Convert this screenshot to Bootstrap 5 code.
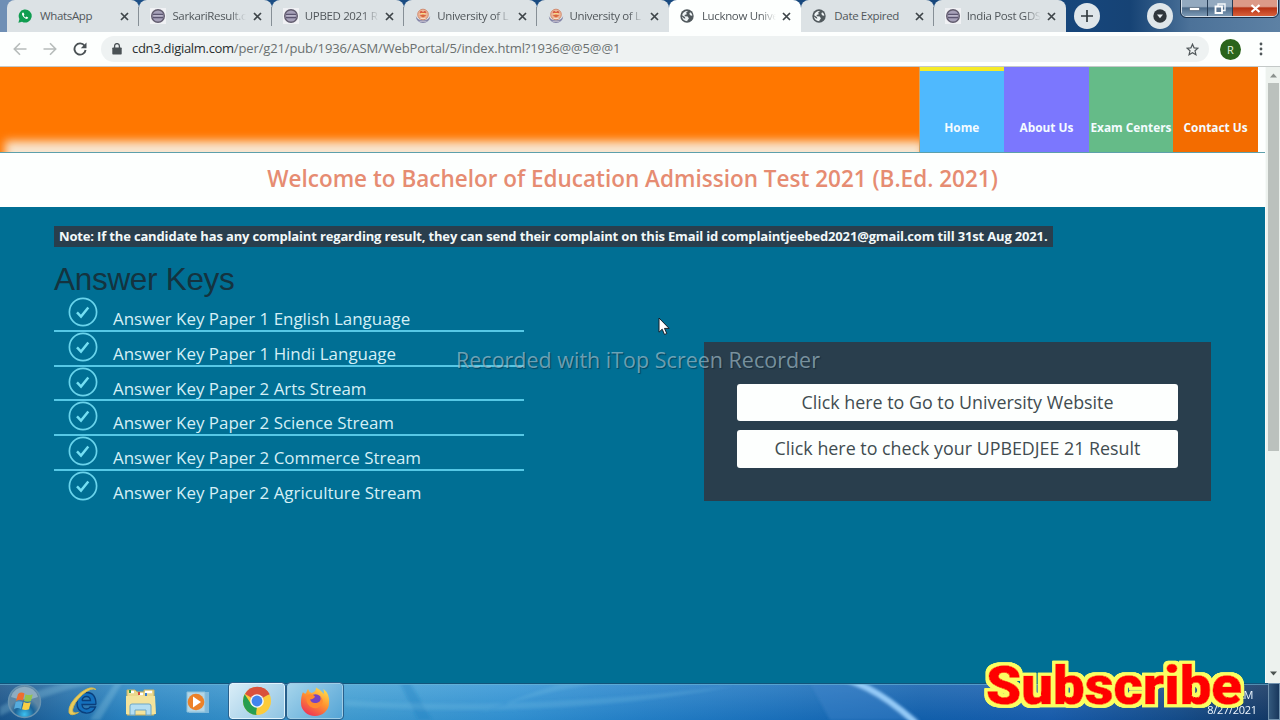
<!DOCTYPE html>
<html lang="en">
<head>
    <meta charset="UTF-8">
    <meta name="viewport" content="width=device-width, initial-scale=1.0">
    <title>Lucknow University</title>
    <!-- Bootstrap CSS -->
    <link href="https://cdn.jsdelivr.net/npm/bootstrap@5.3.0/dist/css/bootstrap.min.css" rel="stylesheet">
    <style>
        body {
            font-family: "Open Sans", "Noto Sans", sans-serif;
            width: 1280px;
            height: 720px;
            background: #006f94;
        }
        svg { display: block; flex: none; }

        /* browser tabs */
        .tab-strip {
            height: 32px;
            padding-left: 7px;
            background: linear-gradient(90deg, #6f8fb5 0, #6f8fb5 8px, #1c4f86 140px, #16457a 1090px, #164375 1130px, #4c7299 1190px, #5d81a4 1280px);
        }
        .browser-tab {
            width: 132.4px;
            height: 32px;
            padding: 0 10px 0 11px;
            background: #dce2e5;
            border-radius: 8px 8px 0 0;
            font-size: 11.5px;
            color: #51575b;
        }
        .browser-tab + .browser-tab::before {
            content: "";
            width: 1px;
            height: 19px;
            margin-left: -12px;
            margin-right: 11px;
            background: #868f96;
        }
        .browser-tab.current { background: #fdfffe; }
        .browser-tab.current::before, .browser-tab.current + .browser-tab::before { visibility: hidden; }
        .tab-label {
            width: 74px;
            margin-left: 6px;
            letter-spacing: -.35px;
            -webkit-mask-image: linear-gradient(90deg, #000 78%, transparent 100%);
        }
        .tab-label.whole { -webkit-mask-image: none; }
        .round-btn {
            width: 26px;
            height: 26px;
            margin-top: 3px;
            background: #dfe6ea;
        }
        .window-btns {
            width: 97px;
            height: 17px;
            margin-right: 2px;
            border: 1px solid #d5dee8;
            border-top: 0;
            border-radius: 0 0 5px 5px;
            outline: 1px solid #1c3149;
        }
        .win-btn { width: 27%; background: linear-gradient(#93a9bf 0 40%, #4b6988 50%, #7d9ab5); border-right: 1px solid #263c55; }
        .win-close { background: linear-gradient(#dc9a88 0 40%, #b63214 50%, #d9603a); }

        /* address row */
        .address-row { height: 35px; padding-left: 13px; background: #fdfffe; border-bottom: 1px solid #c4c9c8; }
        .address-pill {
            width: 1108px;
            height: 26px;
            margin-left: 14px;
            padding: 0 10px 0 11px;
            background: #eef2f2;
            font-size: 13px;
            letter-spacing: -.13px;
            color: #6a706f;
        }
        .address-pill b { font-weight: 400; letter-spacing: -.3px; color: #2a2f30; }
        .url-text { margin-left: 10px; }
        .avatar-dot { width: 21px; height: 21px; margin-right: 18px; background: #2b641b; color: #e4f2df; font: 11px "Open Sans", sans-serif; }
        .menu-dots { margin-right: 17px; }

        /* page */
        .page-view { height: 616px; }
        .page-body { width: 1265px; }
        .banner { height: 86px; background: #fdfffe; border-bottom: 1px solid #5da0ab; }
        .banner-art {
            width: 919.5px;
            background: #ff7700;
            overflow: hidden;
            border-right: 1px solid #c9a36c;
        }
        .banner-art::after {
            content: "";
            width: 100%;
            height: 40px;
            margin: 0 -30px -29px 5px;
            background: #f8e6d0;
            filter: blur(5px);
        }
        .nav-tile {
            width: 84.6px;
            padding-top: 51px;
            font-size: 11.85px;
            font-weight: 700;
            line-height: 18px;
            white-space: nowrap;
            color: #f4fbff;
        }
        .tile-home { background: #4fb9fe; border-top: 4px solid #f5ea27; padding-top: 47px; }
        .tile-about { background: #7b77fe; }
        .tile-exam { background: #65bb88; }
        .tile-contact { background: #f36c00; }
        .welcome {
            height: 54px;
            padding-bottom: 3px;
            background: #fdfffe;
            font-size: 22.5px;
            font-weight: 600;
            color: #e68c72;
        }
        .content-area { padding: 19px 54px 0; height: 476px; }
        .note-bar {
            width: 999px;
            height: 21px;
            padding-left: 5px;
            background: #293e4d;
            font-size: 13px;
            font-weight: 700;
            letter-spacing: -.16px;
            line-height: 20px;
            color: #f2f8f9;
            white-space: nowrap;
        }
        .keys-title {
            font: 31.5px/38px "Liberation Sans", Arial, sans-serif;
            letter-spacing: -.3px;
            color: #14333f;
            margin: 13px 0 -.6px;
        }
        .keys-list { width: 470px; }
        .key-row { height: 34.65px; border-bottom: 2px solid #56c8e6; padding-left: 14px; }
        .key-row:last-child { border: 0; }
        .key-row a { margin: 10px 0 0 15px; font-size: 16.93px; line-height: 24px; color: #d5eff6; }
        .link-panel {
            width: 507px;
            height: 159px;
            margin-top: 94.6px;
            padding: 42px 33px 0;
            background: #293e4d;
        }
        .panel-btn {
            height: 37.5px;
            background: #fdfffe;
            border-radius: 3px;
            font-size: 17.85px;
            line-height: 37px;
            color: #414c50;
        }
        .panel-btn + .panel-btn { margin-top: 9.3px; }

        /* scrollbar */
        .scroll-track { width: 15px; background: #edf2ee; border-left: 1px solid #f6faf8; padding: 16px 1px 0 2px; }
        .scroll-thumb { height: 368px; background: #bbc1bd; }
        .scroll-up, .scroll-down { left: 4px; }
        .scroll-up { top: 6px; }
        .scroll-down { bottom: 7px; }

        /* taskbar */
        .taskbar { height: 37px; background: #1668b4; }
        .task-slot { width: 57px; height: 37px; }
        .task-slot.start-slot { padding-left: 7px; }
        .task-slot.ie-slot { width: 51px; }
        .task-open {
            width: 56px;
            height: 36px;
            margin: 0 1px;
            border: 1px solid #e2f4fc;
            border-radius: 3px;
            outline: 1px solid #28608c;
            background: linear-gradient(135deg, #d9edf7, #8fc4e3);
        }
        .task-open.first { margin-left: 3px; }
        .task-open.dim { background: linear-gradient(135deg, #a5d4eb, #55a5d6); border-color: #a0cde5; }
        .clock { width: 64px; padding-top: 4px; font-size: 11px; line-height: 15px; color: #eef7ff; letter-spacing: -.3px; }
        .clock-time { padding-right: 11px; }
        .peek-btn { width: 12px; border: 1px solid #7192ae; background: linear-gradient(90deg, #34597d, #18375c); }

        /* things lying over the page */
        .watermark {
            left: 456px;
            top: 343px;
            font-size: 21.5px;
            line-height: 34px;
            color: rgba(180, 205, 215, .62);
            text-shadow: 1px 1px 1px rgba(0, 30, 45, .5);
            white-space: nowrap;
        }
        .pointer { left: 658px; top: 317px; }
        .subscribe { left: 970px; top: 645px; }
    </style>
</head>
<body class="position-relative overflow-hidden d-flex flex-column">

<!-- shared icons -->
<svg width="0" height="0" class="position-absolute">
    <symbol id="ico-x" viewBox="0 0 9 9"><path d="M1 1 8 8M8 1 1 8" stroke="#3e4549" stroke-width="1.7"/></symbol>
    <symbol id="ico-sarkari" viewBox="0 0 16 16">
        <path fill="#f0f1f4" d="M0 0h16v16H0z"/>
        <circle cx="8" cy="8" r="6.3" fill="#a6a0b8" stroke="#625c6e" stroke-width="1.4"/>
        <path d="M3 6.3h10M3 9.5h10" stroke="#5b5570" stroke-width="1.3"/><path d="M3.5 7.9h9" stroke="#c9c5d6"/>
    </symbol>
    <symbol id="ico-univ" viewBox="0 0 16 16">
        <path d="M.8 8a7.200 7 0 0 0 14.400 0q-1.500 4.200-7.200 4.200T.8 8" fill="#8384a6"/>
        <circle cx="8" cy="6.500" r="5.300" fill="#edb79a" stroke="#cf8468" stroke-width=".9"/>
        <path d="M4.500 4.500 6 2.800l2 1.200 2-1.200 1.500 1.700L8 6z" fill="#d6543c"/>
        <path d="M4.500 7.500 8 9.500l3.500-2L8 6.500z" fill="#d9683d"/>
        <path d="M6 5.500h4" stroke="#f8dc86" stroke-width="1.200"/><path d="M5.500 10.500h5" stroke="#f4dfc8"/><path d="M4.500 13.300h7" stroke="#d7cfdc" stroke-width=".8"/>
    </symbol>
    <symbol id="ico-globe" viewBox="0 0 14 14">
        <circle cx="7" cy="7" r="6.700" fill="#51595d"/>
        <path d="M8 2 6.200 3.600l.6 1.600-2.300.8.4 1.300 2.900.3 1.100 1.800-1.500 2-.2.900C4.200 12.100 2.200 10 1.900 7.600l2.300 1.900 1.200.1-.6-1.700-2.700-1.700C2.600 3.500 5 1.700 8 2M10 3.200 9.300 5l1.600 1.800 1.500-.2C12.200 5 11.200 3.800 10 3.200" fill="#eef3f5"/>
    </symbol>
    <symbol id="ico-check" viewBox="0 0 30 30">
        <circle cx="15" cy="15" r="13.600" fill="none" stroke="#69d4ec" stroke-width="1.700"/>
        <path d="m9 15.300 4 4.200 7.300-9" fill="none" stroke="#74dff3" stroke-width="2.500"/>
    </symbol>
</svg>

<!-- tabs -->
<div class="tab-strip d-flex flex-shrink-0">
    <div class="browser-tab d-flex align-items-center">
        <svg width="14" height="14" viewBox="0 0 14 14"><path d="M.4 13.700 1.400 10A6.500 6.500 0 1 1 4 12.700z" fill="#109d50"/><path d="M4.800 3.600c-1.400.8-1 2.500.7 4.400 2 2 3.700 2.500 4.700 1.100l-.1-.7-1.600-.8-.8.8C6.800 8 6.100 7.200 5.700 6.400l.7-.8-.8-1.900z" fill="#fff"/></svg>
        <div class="tab-label whole text-nowrap ms-2">WhatsApp</div>
        <svg width="9" height="9" class="ms-auto"><use href="#ico-x"/></svg>
    </div>
    <div class="browser-tab d-flex align-items-center">
        <svg width="16" height="16"><use href="#ico-sarkari"/></svg>
        <div class="tab-label text-nowrap">SarkariResult.c</div>
        <svg width="9" height="9" class="ms-auto"><use href="#ico-x"/></svg>
    </div>
    <div class="browser-tab d-flex align-items-center">
        <svg width="16" height="16"><use href="#ico-sarkari"/></svg>
        <div class="tab-label text-nowrap">UPBED 2021 R</div>
        <svg width="9" height="9" class="ms-auto"><use href="#ico-x"/></svg>
    </div>
    <div class="browser-tab d-flex align-items-center">
        <svg width="16" height="16"><use href="#ico-univ"/></svg>
        <div class="tab-label text-nowrap">University of L</div>
        <svg width="9" height="9" class="ms-auto"><use href="#ico-x"/></svg>
    </div>
    <div class="browser-tab d-flex align-items-center">
        <svg width="16" height="16"><use href="#ico-univ"/></svg>
        <div class="tab-label text-nowrap">University of L</div>
        <svg width="9" height="9" class="ms-auto"><use href="#ico-x"/></svg>
    </div>
    <div class="browser-tab current d-flex align-items-center">
        <svg width="14" height="14"><use href="#ico-globe"/></svg>
        <div class="tab-label text-nowrap ms-2">Lucknow Unive</div>
        <svg width="9" height="9" class="ms-auto"><use href="#ico-x"/></svg>
    </div>
    <div class="browser-tab d-flex align-items-center">
        <svg width="14" height="14"><use href="#ico-globe"/></svg>
        <div class="tab-label whole text-nowrap ms-2">Date Expired</div>
        <svg width="9" height="9" class="ms-auto"><use href="#ico-x"/></svg>
    </div>
    <div class="browser-tab d-flex align-items-center">
        <svg width="16" height="16"><use href="#ico-sarkari"/></svg>
        <div class="tab-label text-nowrap">India Post GDS</div>
        <svg width="9" height="9" class="ms-auto"><use href="#ico-x"/></svg>
    </div>
    <div class="round-btn rounded-circle d-flex align-items-center justify-content-center ms-2">
        <svg width="12" height="12" viewBox="0 0 12 12"><path d="M6 0v12M0 6h12" stroke="#333b40" stroke-width="1.700"/></svg>
    </div>
    <div class="round-btn rounded-circle d-flex align-items-center justify-content-center ms-auto me-2">
        <svg width="14" height="14" viewBox="0 0 14 14"><circle cx="7" cy="7" r="6.700" fill="#30373c"/><path d="M4 5.500h6L7 9.300z" fill="#e8eef1"/></svg>
    </div>
    <div class="window-btns d-flex overflow-hidden">
        <div class="win-btn d-flex align-items-center justify-content-center"><svg width="11" height="5"><path d="M.5 1.500h10v3H.5z" fill="#fff" stroke="#43566c" stroke-width=".6"/></svg></div>
        <div class="win-btn d-flex align-items-center justify-content-center"><svg width="12" height="11"><path d="M4 1h7v6.500H4z" fill="none" stroke="#f4f7fa" stroke-width="1.400"/><path d="M1.500 3.500H8V10H1.500z" fill="#5b7591" stroke="#fff" stroke-width="1.800"/></svg></div>
        <div class="win-close flex-fill d-flex align-items-center justify-content-center"><svg width="11" height="9"><path d="m1.500 1 8 7m0-7-8 7" stroke="#fff" stroke-width="2.200"/></svg></div>
    </div>
</div>

<!-- address row -->
<div class="address-row d-flex align-items-center flex-shrink-0">
    <svg width="14" height="14" viewBox="0 0 14 14" class="me-3"><path d="M13.500 7H1.500M7 1.300 1.300 7 7 12.700" fill="none" stroke="#b7bcbb" stroke-width="1.600"/></svg>
    <svg width="14" height="14" viewBox="0 0 14 14" class="me-3"><path d="M.5 7h12M7 1.300 12.700 7 7 12.700" fill="none" stroke="#b7bcbb" stroke-width="1.600"/></svg>
    <svg width="14" height="14" viewBox="0 0 14 14"><path d="M11.600 3.700A5.600 5.600 0 1 0 12.600 8" fill="none" stroke="#4a5154" stroke-width="1.900"/><path d="M13.500.5v5.700H7.800z" fill="#4a5154"/></svg>
    <div class="address-pill rounded-pill d-flex align-items-center">
        <svg width="10" height="12" viewBox="0 0 10 12"><path d="M1 4.500h8a.7.700 0 0 1 .7.700v5.600a.7.700 0 0 1-.7.700H1a.7.700 0 0 1-.7-.7V5.200A.7.700 0 0 1 1 4.500" fill="#4a5154"/><path d="M2.600 5V3a2.400 2.400 0 0 1 4.800 0v2" fill="none" stroke="#4a5154" stroke-width="1.300"/></svg>
        <div class="url-text text-nowrap"><b>cdn3.digialm.com</b>/per/g21/pub/1936/ASM/WebPortal/5/index.html?1936@@5@@1</div>
        <svg width="13" height="13" viewBox="0 0 14 14" class="ms-auto"><path d="m7 1.300 1.700 3.900 4.200.4-3.200 2.800 1 4.200L7 10.400l-3.700 2.200 1-4.200L1.100 5.600l4.200-.4z" fill="none" stroke="#50575a" stroke-width="1.300"/></svg>
    </div>
    <div class="avatar-dot rounded-circle d-flex align-items-center justify-content-center ms-auto">R</div>
    <svg width="4" height="14" viewBox="0 0 4 14" class="menu-dots"><g fill="#50575a"><circle cx="2" cy="2" r="1.400"/><circle cx="2" cy="7" r="1.400"/><circle cx="2" cy="12" r="1.400"/></g></svg>
</div>

<!-- page -->
<div class="page-view d-flex flex-shrink-0">
    <div class="page-body">
        <div class="banner d-flex">
            <div class="banner-art d-flex align-items-end"></div>
            <div class="nav-tile tile-home text-center">Home</div>
            <div class="nav-tile tile-about text-center">About Us</div>
            <div class="nav-tile tile-exam text-center">Exam Centers</div>
            <div class="nav-tile tile-contact text-center">Contact Us</div>
        </div>
        <div class="welcome d-flex align-items-center justify-content-center">Welcome to Bachelor of Education Admission Test 2021 (B.Ed. 2021)</div>
        <div class="content-area">
            <div class="note-bar">Note: If the candidate has any complaint regarding result, they can send their complaint on this Email id complaintjeebed2021@gmail.com till 31st Aug 2021.</div>
            <div class="d-flex justify-content-between">
                <div class="keys-list">
                    <h1 class="keys-title">Answer Keys</h1>
                    <div class="key-row d-flex"><svg width="30" height="30"><use href="#ico-check"/></svg><a class="text-decoration-none">Answer Key Paper 1 English Language</a></div>
                    <div class="key-row d-flex"><svg width="30" height="30"><use href="#ico-check"/></svg><a class="text-decoration-none">Answer Key Paper 1 Hindi Language</a></div>
                    <div class="key-row d-flex"><svg width="30" height="30"><use href="#ico-check"/></svg><a class="text-decoration-none">Answer Key Paper 2 Arts Stream</a></div>
                    <div class="key-row d-flex"><svg width="30" height="30"><use href="#ico-check"/></svg><a class="text-decoration-none">Answer Key Paper 2 Science Stream</a></div>
                    <div class="key-row d-flex"><svg width="30" height="30"><use href="#ico-check"/></svg><a class="text-decoration-none">Answer Key Paper 2 Commerce Stream</a></div>
                    <div class="key-row d-flex"><svg width="30" height="30"><use href="#ico-check"/></svg><a class="text-decoration-none">Answer Key Paper 2 Agriculture Stream</a></div>
                </div>
                <div class="link-panel">
                    <div class="panel-btn text-center">Click here to Go to University Website</div>
                    <div class="panel-btn text-center">Click here to check your UPBEDJEE 21 Result</div>
                </div>
            </div>
        </div>
    </div>
    <div class="scroll-track position-relative">
        <svg class="scroll-up position-absolute" width="8" height="5"><path d="M0 4.500h7L3.500.5z" fill="#8b918e"/></svg>
        <div class="scroll-thumb"></div>
        <svg class="scroll-down position-absolute" width="8" height="5"><path d="M0 .5h7L3.500 4.500z" fill="#4c5350"/></svg>
    </div>
</div>

<!-- taskbar -->
<div class="taskbar position-relative flex-shrink-0">
    <svg class="position-absolute top-0 start-0" width="1280" height="37" viewBox="0 0 1280 37">
        <defs>
            <linearGradient id="barFill">
                <stop offset="0" stop-color="#1b5488"/><stop offset=".05" stop-color="#256fa8"/><stop offset=".1" stop-color="#2b87c4"/>
                <stop offset=".27" stop-color="#45a2d5"/><stop offset=".4" stop-color="#3596d6"/><stop offset=".5" stop-color="#2784cb"/>
                <stop offset=".6" stop-color="#1d74bf"/><stop offset=".72" stop-color="#1361ae"/><stop offset=".82" stop-color="#1a5dad"/>
                <stop offset=".92" stop-color="#164b87"/><stop offset="1" stop-color="#14335c"/>
            </linearGradient>
            <linearGradient id="barShade" x2="0" y2="1"><stop offset="0" stop-color="#fff" stop-opacity=".12"/><stop offset="1" stop-color="#004a90" stop-opacity=".12"/></linearGradient>
            <filter id="soft"><feGaussianBlur stdDeviation="1.500"/></filter>
        </defs>
        <path fill="url(#barFill)" d="M0 0h1280v37H0z"/>
        <path fill="url(#barShade)" d="M0 0h1280v37H0z"/>
        <g filter="url(#soft)">
            <path d="M0 33Q40 12 95 0H65Q20 12 0 24zM100 37 122 0h-7L90 37z" fill="#9fd3ea" opacity=".28"/>
            <path d="m400 0 18 37h14L410 0z" fill="#1f7fc0" opacity=".35"/>
            <path d="M465 37Q520 12 600 0h-38Q510 17 465 37M345 17q160 12 390-14-180 34-390 20z" fill="#8fd0f0" opacity=".18"/>
            <path d="m810 0 20 37h90Q880 5 840 0z" fill="#4388cc" opacity=".4"/>
            <path d="M836-6Q878 2 924 48" fill="none" stroke="#94caf7" stroke-width="6"/>
        </g>
        <path d="M0 .5h1280" stroke="#12547b"/><path d="M0 1.500h1280" stroke="#6db8d7" opacity=".6"/>
    </svg>
    <div class="d-flex position-relative h-100">
        <div class="task-slot start-slot d-flex align-items-center">
            <svg width="35" height="35" viewBox="0 0 35 35">
                <defs><radialGradient id="orb" cy=".9"><stop offset="0" stop-color="#3cc0f0"/><stop offset=".6" stop-color="#1c6398"/><stop offset="1" stop-color="#5f87a4"/></radialGradient></defs>
                <circle cx="17.500" cy="17.500" r="16" fill="url(#orb)" stroke="#6993b0" stroke-width="1.500"/>
                <path d="M4 13a14 14 0 0 1 27 0q-13 5-27 0" fill="#d4e4ec" opacity=".4"/>
                <path d="M11 10q3-2.500 6.500-.5L16 16.500q-3-1.600-7 .3z" fill="#ee6d2f"/><path d="M18.500 10.200q3.500 1.800 7.200 0L24 17q-3.700 1.500-7 0z" fill="#93c44d"/>
                <path d="M8.700 18q3.500-1.600 7-.2L14 25q-3.500-1.800-7 0z" fill="#55acde"/><path d="M16.700 18q3.500 1.800 7 .3L22 25.300q-3.500 1.600-7 0z" fill="#f9cf43"/>
            </svg>
        </div>
        <div class="task-slot ie-slot d-flex align-items-center justify-content-center">
            <svg width="34" height="34" viewBox="0 0 34 34">
                <path d="M30 19.500H16q.5 4.500 4.500 4.500 2.500 0 3.500-2h5.500Q27 28.500 20 28q-9.500-1-9-10.500Q11.500 7.500 20.500 7.500q9.500 0 9.500 12M16 15.500h8.500q-.5-4-4-4-3.800 0-4.500 4" fill="#1470bd" stroke="#0a3f7c" stroke-width="1.300"/>
                <path d="M30 4.500Q25 0 15 7.500 1.500 19 3 27.500q1.500 4.500 9.500 0-6 1.500-6-2.500Q7.500 18 16.500 9.500q9-7.500 13.500-5" fill="#e9cc5c" stroke="#d6b74a" stroke-width=".9"/>
            </svg>
        </div>
        <div class="task-slot d-flex align-items-center justify-content-center ms-1">
            <svg width="32" height="30" viewBox="0 0 32 30">
                <path d="M2 3h8l2 2h7V3h10v25H2z" fill="#ecd88b" stroke="#c8b364"/><path d="M4 5h5M14 7h4M20 5h7" stroke="#fff" stroke-width="2.500"/><path d="M5 3v3" stroke="#359d46" stroke-width="2"/><path d="M14 5v3" stroke="#d34d40" stroke-width="2"/><path d="M21 6v3" stroke="#3c7dd1" stroke-width="2"/>
                <path d="M1 9h29l1 18H1z" fill="#f3e39c"/><path d="M5 28v-9q0-2 2-2h17q2 0 2 2v9h-5v-5H10v5z" fill="#b4def2" stroke="#6da7c8"/>
            </svg>
        </div>
        <div class="task-slot d-flex align-items-center justify-content-center">
            <svg width="24" height="24" viewBox="0 0 24 24"><path d="M3 2h20v21H3z" fill="#7fb9dc"/><path d="M1 2h18v20H1z" fill="#b3d6e7" stroke="#8bc0da"/><circle cx="10" cy="12" r="8.300" fill="#ec8128"/><path d="M7 6.500v11l8-5.500z" fill="#fff"/></svg>
        </div>
        <div class="task-open first d-flex align-items-center justify-content-center">
            <svg width="30" height="30" viewBox="0 0 30 30">
                <circle cx="15" cy="15" r="14" fill="#fccb3b"/><path d="M15 15 3 8a14 14 0 0 1 24.500 0z" fill="#d9513d"/><path d="M15 1A14 14 0 0 1 27.500 8.500H15z" fill="#d9513d"/>
                <path d="M2.700 8.300 9.400 18.500 15 21.500 14.500 29A14 14 0 0 1 2.700 8.300" fill="#279e51"/><path d="M14 29 20.500 18 15 21z" fill="#fccb3b"/>
                <circle cx="15" cy="15" r="6.800" fill="#f3f7fa"/><circle cx="15" cy="15" r="5.400" fill="#4284ed"/>
            </svg>
        </div>
        <div class="task-open dim d-flex align-items-center justify-content-center">
            <svg width="30" height="30" viewBox="0 0 30 30">
                <defs><linearGradient id="fox" x1=".8" x2=".2" y2="1"><stop offset="0" stop-color="#ffe14d"/><stop offset=".45" stop-color="#ff9330"/><stop offset="1" stop-color="#ec2c59"/></linearGradient></defs>
                <path d="M3 6q1 2 3 1.500Q7 4 8 3q1 3 3.500 4Q16 6 16 1.500 21 4 24 8l-.5-5Q30 8 29 17a14 13 0 0 1-28 0Q1 10 3 6" fill="url(#fox)"/>
                <circle cx="15.500" cy="14.500" r="6.300" fill="#7444c5"/><path d="M7 9q5-2 8 1.500-1 2.500-5 3 2 5 8 3 4-2 2-6 5 4 1 9-5 5-11 1-5-4-3-11.500" fill="#ff8a30"/>
            </svg>
        </div>
        <div class="clock ms-auto text-center"><div class="clock-time text-end">10:12 AM</div><div>8/27/2021</div></div>
        <div class="peek-btn ms-1"></div>
    </div>
</div>

<!-- overlays -->
<div class="watermark position-absolute">Recorded with iTop Screen Recorder</div>
<svg class="pointer position-absolute" width="13" height="19" viewBox="0 0 13 19"><path d="M1 1v14.200l3.200-3 2.300 5.300 2.300-1-2.300-5.100h4.600z" fill="#fff" stroke="#17202a"/></svg>
<svg class="subscribe position-absolute" width="290" height="75" viewBox="0 0 290 75">
    <filter id="rim" x="-5%" y="-10%" width="110%" height="120%">
        <feMorphology in="SourceAlpha" operator="dilate" radius="2.500"/>
        <feGaussianBlur stdDeviation=".7" result="grown"/>
        <feFlood flood-color="#fbff62"/>
        <feComposite in2="grown" operator="in" result="halo"/>
        <feMerge><feMergeNode in="halo"/><feMergeNode in="halo"/><feMergeNode in="SourceGraphic"/></feMerge>
    </filter>
    <text x="16" y="59" textLength="256" lengthAdjust="spacingAndGlyphs" font-family="Roboto, sans-serif" font-weight="900" font-size="54" fill="#fe0000" stroke="#fe0000" stroke-width=".7" stroke-linejoin="round" filter="url(#rim)">Subscribe</text>
</svg>

<script src="https://cdn.jsdelivr.net/npm/bootstrap@5.3.0/dist/js/bootstrap.bundle.min.js"></script>
</body>
</html>
